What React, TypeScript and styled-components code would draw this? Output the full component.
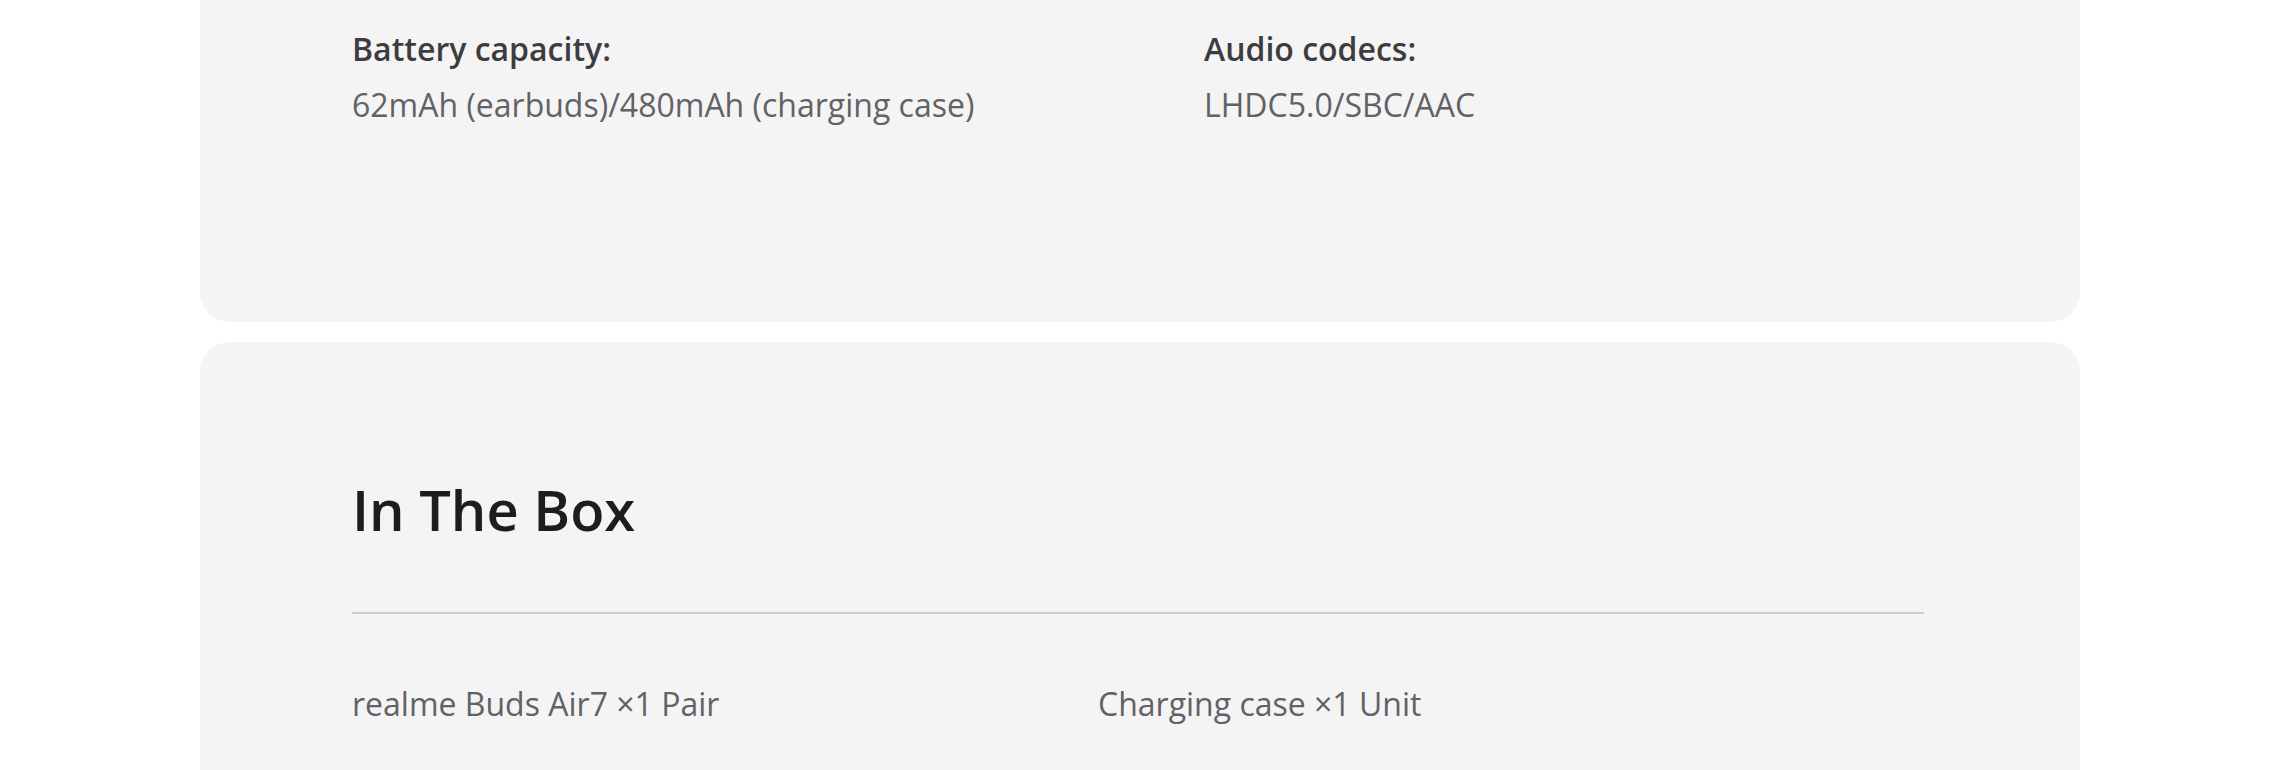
import React from "react";
import styled, { createGlobalStyle } from "styled-components";

const GlobalStyle = createGlobalStyle`
  html, body { margin: 0; padding: 0; background: #ffffff; }
  body { font-family: "Open Sans", "Noto Sans", Arial, sans-serif; overflow: hidden; }
`;

const Page = styled.div`
  display: flex;
  flex-direction: column;
  gap: 20px;
  width: 1880px;
  margin: -100px auto 0;
`;

const Card = styled.section<{ $pt: number; $pb: number }>`
  background: #f4f4f4;
  border-radius: 30px;
  padding: ${(p) => p.$pt}px 156px ${(p) => p.$pb}px 152px;
`;

const SpecGrid = styled.div`
  display: grid;
  grid-template-columns: 852px 1fr;
`;

const Spec = styled.div`
  display: flex;
  flex-direction: column;
`;

const SpecLabel = styled.div`
  font-size: 32px;
  line-height: 42px;
  font-weight: 600;
  color: #3d3d3f;
  margin-bottom: 14px;
`;

const SpecValue = styled.div`
  font-size: 32px;
  line-height: 42px;
  font-weight: 400;
  color: #626266;
`;

const Heading = styled.h2`
  margin: 0;
  font-size: 56px;
  line-height: 67px;
  font-weight: 600;
  color: #1d1d1f;
`;

const Divider = styled.hr`
  margin: 69px 0 66px;
  border: none;
  height: 2px;
  background: #cdcdcd;
`;

const BoxGrid = styled.div`
  display: grid;
  grid-template-columns: 746px 1fr;
`;

const BoxItem = styled.div`
  font-size: 32px;
  line-height: 48px;
  color: #626266;
`;

export default function App() {
  return (
    <>
      <GlobalStyle />
      <Page>
        <Card $pt={128} $pb={196}>
          <SpecGrid>
            <Spec>
              <SpecLabel>Battery capacity:</SpecLabel>
              <SpecValue>62mAh (earbuds)/480mAh (charging case)</SpecValue>
            </Spec>
            <Spec>
              <SpecLabel>Audio codecs:</SpecLabel>
              <SpecValue>LHDC5.0/SBC/AAC</SpecValue>
            </Spec>
          </SpecGrid>
        </Card>
        <Card $pt={134} $pb={120}>
          <Heading>In The Box</Heading>
          <Divider />
          <BoxGrid>
            <BoxItem>realme Buds Air7 ×1 Pair</BoxItem>
            <BoxItem>Charging case ×1 Unit</BoxItem>
          </BoxGrid>
        </Card>
      </Page>
    </>
  );
}
